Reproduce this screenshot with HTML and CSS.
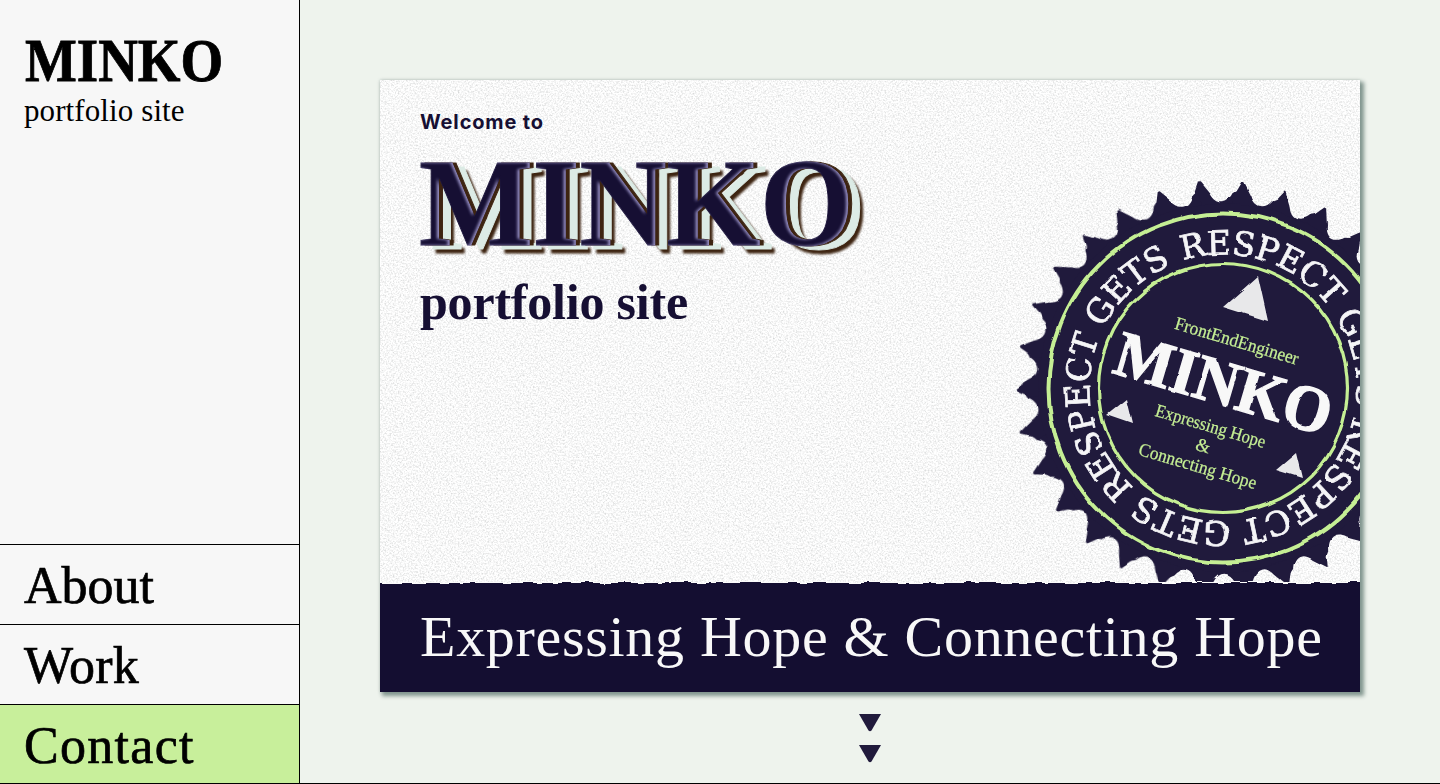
FILE: index.html
```html
<!DOCTYPE html>
<html lang="en">
<head>
<meta charset="utf-8">
<title>MINKO portfolio site</title>
<link rel="stylesheet" href="styles.css">
</head>
<body>
<svg class="defs" width="0" height="0" aria-hidden="true">
  <defs>
    <filter id="title-bevel" x="-5%" y="-10%" width="115%" height="130%" color-interpolation-filters="sRGB">
      <feFlood flood-color="#3d2411" result="brown"/>
      <feFlood flood-color="#dcebe5" result="mint"/>
      <feFlood flood-color="#b9b2ea" flood-opacity=".85" result="lilac"/>
      <feOffset in="SourceAlpha" dx="16" dy="8" result="o3"/>
      <feGaussianBlur in="o3" stdDeviation="1.2" result="b3"/>
      <feComposite in="brown" in2="b3" operator="in" result="far"/>
      <feOffset in="SourceAlpha" dx="12" dy="4" result="o2"/>
      <feComposite in="mint" in2="o2" operator="in" result="mid"/>
      <feOffset in="SourceAlpha" dx="4" dy="0" result="o1"/>
      <feComposite in="brown" in2="o1" operator="in" result="near"/>
      <feOffset in="SourceAlpha" dx="-2.5" dy="0" result="in1"/>
      <feGaussianBlur in="in1" stdDeviation="1.7" result="in2"/>
      <feComposite in="lilac" in2="in2" operator="out" result="in3"/>
      <feComposite in="in3" in2="SourceAlpha" operator="in" result="glow"/>
      <feMerge>
        <feMergeNode in="far"/><feMergeNode in="mid"/><feMergeNode in="near"/>
        <feMergeNode in="SourceGraphic"/><feMergeNode in="glow"/>
      </feMerge>
    </filter>
    <filter id="rough" x="-5%" y="-5%" width="110%" height="110%" color-interpolation-filters="sRGB">
      <feTurbulence type="fractalNoise" baseFrequency="0.05" numOctaves="1" seed="4"/>
      <feDisplacementMap in="SourceGraphic" scale="6" xChannelSelector="R" yChannelSelector="G"/>
      <feGaussianBlur stdDeviation=".5"/>
    </filter>
    <filter id="rough-fine" x="-5%" y="-5%" width="110%" height="110%" color-interpolation-filters="sRGB">
      <feTurbulence type="fractalNoise" baseFrequency="0.11" numOctaves="1" seed="9"/>
      <feDisplacementMap in="SourceGraphic" scale="2.6" xChannelSelector="R" yChannelSelector="G"/>
      <feGaussianBlur stdDeviation=".45"/>
    </filter>
    <filter id="torn" filterUnits="userSpaceOnUse" x="-20" y="0" width="1020" height="130" color-interpolation-filters="sRGB">
      <feTurbulence type="fractalNoise" baseFrequency="0.06 0.01" numOctaves="2" seed="3"/>
      <feDisplacementMap in="SourceGraphic" scale="7" xChannelSelector="R" yChannelSelector="G"/>
      <feGaussianBlur stdDeviation=".4"/>
    </filter>
    <filter id="grain" x="0" y="0" width="100%" height="100%" color-interpolation-filters="sRGB">
      <feTurbulence type="fractalNoise" baseFrequency="0.6" numOctaves="3" seed="7"/>
      <feColorMatrix values="0 0 0 0 .3  0 0 0 0 .32  0 0 0 0 .32  .45 0 0 0 -.185"/>
    </filter>
  </defs>
</svg>
<div class="page">
  <aside class="sidebar">
    <header class="brand">
      <h1 class="brand-name"><span>MINKO</span></h1>
      <p class="brand-sub">portfolio site</p>
    </header>
    <nav class="nav">
      <a class="nav-item">About</a>
      <a class="nav-item nav-work">Work</a>
      <a class="nav-item nav-contact">Contact</a>
    </nav>
  </aside>
  <main class="main">
    <section class="card">
      <svg class="grain" width="980" height="612" aria-hidden="true"><rect width="980" height="612" filter="url(#grain)"/></svg>
      <div class="hero">
        <p class="welcome">Welcome to</p>
        <h2 class="hero-title"><span>MINKO</span></h2>
        <p class="hero-sub">portfolio site</p>
      </div>
      <svg class="badge" width="344" height="404" viewBox="-207 -210 344 404">
        <defs>
          <path id="tooth" d="M0 -150L-9 -190L-1 -207H1L9.500 -193.800C14.100 -182.500 24.300 -181.400 31 -191.500L40 -196L32 -150Z"/>
          <g id="teeth5">
            <use href="#tooth"/><use href="#tooth" transform="rotate(12)"/><use href="#tooth" transform="rotate(24)"/>
            <use href="#tooth" transform="rotate(36)"/><use href="#tooth" transform="rotate(48)"/>
          </g>
          <g id="teeth10"><use href="#teeth5"/><use href="#teeth5" transform="rotate(60)"/></g>
          <path id="ring-path" d="M0 -133.500A133.500 133.500 0 0 1 0 133.500A133.500 133.500 0 0 1 0 -133.500"/>
        </defs>
        <g filter="url(#rough)">
          <g class="badge-body" transform="rotate(-6.4)">
            <use href="#teeth10"/><use href="#teeth10" transform="rotate(120)"/><use href="#teeth10" transform="rotate(240)"/>
            <circle r="184"/>
          </g>
          <circle class="ring" r="174.500" stroke-width="4"/>
          <circle class="ring" r="124.500" stroke-width="3.200"/>
          <path class="mark" d="M35 -112L0 -81L45 -67Z M-97 11L-117 27L-91 36Z M73 65L53 82L79 90Z"/>
        </g>
        <g filter="url(#rough-fine)">
          <text class="ring-text" transform="rotate(-17.500)"><textPath href="#ring-path" textLength="826">RESPECT GETS RESPECT GETS RESPECT GETS</textPath></text>
          <text class="badge-name" transform="rotate(16.500)" x="-112" y="17" textLength="223" lengthAdjust="spacingAndGlyphs">MINKO</text>
        </g>
        <g class="badge-copy" transform="rotate(16.500)">
          <text x="-64" y="-43" textLength="128" lengthAdjust="spacingAndGlyphs">FrontEndEngineer</text>
          <text x="-58" y="46" textLength="114" lengthAdjust="spacingAndGlyphs">Expressing Hope</text>
          <text x="-10" y="67">&amp;</text>
          <text x="-63" y="88" textLength="122" lengthAdjust="spacingAndGlyphs">Connecting Hope</text>
        </g>
      </svg>
      <div class="banner">
        <svg class="banner-bg" width="980" height="120" aria-hidden="true">
          <g filter="url(#torn)">
            <rect x="-20" y="10" width="1020" height="10" fill="#fbfbfb"/>
            <rect x="-20" y="11" width="1020" height="140" fill="#140e31"/>
          </g>
        </svg>
        <p class="tagline">Expressing Hope &amp; Connecting Hope</p>
      </div>
    </section>
    <div class="scroll">
      <svg width="24" height="18"><path d="M1 0H23L13.500 16.500Q12 18 10.500 16.500Z"/></svg>
      <svg width="24" height="18"><path d="M1 0H23L13.500 16.500Q12 18 10.500 16.500Z"/></svg>
    </div>
  </main>
</div>
</body>
</html>
```
FILE: styles.css
```css
* { box-sizing: border-box; margin: 0; padding: 0; }
body { font-family: "Liberation Serif", "Times New Roman", serif; background: #eef3ed; color: #000; overflow: hidden; }
.defs { position: absolute; }
.page { display: flex; height: 784px; border-bottom: 1px solid #000; }

.sidebar { display: flex; flex-direction: column; justify-content: space-between; width: 300px; background: #f7f7f7; border-right: 1px solid #000; }
.brand { padding: 27px 24px 0; }
.brand-name { font-size: 61px; line-height: 68px; }
.brand-name span { display: inline-block; margin-left: 1px; transform: scaleX(.9); transform-origin: 0 0; -webkit-text-stroke: .8px #000; }
.brand-sub { font-size: 31px; line-height: 32px; letter-spacing: .1px; }
.nav { display: flex; flex-direction: column; }
.nav-item { height: 80px; padding-left: 24px; border-top: 1px solid #000; font-size: 52px; line-height: 82px; -webkit-text-stroke: .7px #000; }
.nav-work { letter-spacing: .2px; }
.nav-contact { height: 79px; letter-spacing: 1.3px; background: #c8ef9b; }

.main { flex: 1; display: flex; flex-direction: column; align-items: center; padding-top: 80px; }
.card { position: relative; display: flex; flex-direction: column; justify-content: space-between; width: 980px; height: 612px; background: #fff; box-shadow: 3px 3px 4px 1px #82968f, 0 0 3px rgba(112, 135, 128, .4); }
.grain { position: absolute; inset: 0; }
.hero { position: relative; padding: 30px 40px 0; color: #160f33; }
.welcome { font: 700 20px/24px Inter, sans-serif; letter-spacing: .85px; }
.hero-title { font-size: 125px; line-height: 138px; height: 140px; }
.hero-title span { display: inline-block; margin-left: -1px; transform: scaleX(.963); transform-origin: 0 0; -webkit-text-stroke: 1px #160f33; filter: url(#title-bevel); }
.hero-sub { font-size: 50px; font-weight: 700; line-height: 56px; letter-spacing: -.2px; }

.badge { position: absolute; left: 636px; top: 98px; }
.badge-body { fill: #201a3c; }
.ring { fill: none; stroke: #c5ef94; }
.mark { fill: #e8e8ea; }
.ring-text { font-family: "DejaVu Serif", serif; font-size: 33.5px; fill: #f5f5f7; stroke: #f5f5f7; stroke-width: .7px; }
.badge-name { font-size: 65px; font-weight: 700; fill: #f8f8f8; stroke: #f8f8f8; stroke-width: 1.4px; }
.badge-copy { font-size: 18.5px; fill: #c5ef94; stroke: #c5ef94; stroke-width: .2px; }

.banner { position: relative; height: 109px; padding: 20px 40px 0; }
.banner-bg { position: absolute; left: 0; bottom: 0; }
.tagline { position: relative; color: #f8f8f8; font-size: 58px; line-height: 68px; letter-spacing: .7px; white-space: nowrap; }

.scroll { display: flex; flex-direction: column; gap: 13px; margin-top: 22px; fill: #201a3c; }
.scroll svg { display: block; }
```
